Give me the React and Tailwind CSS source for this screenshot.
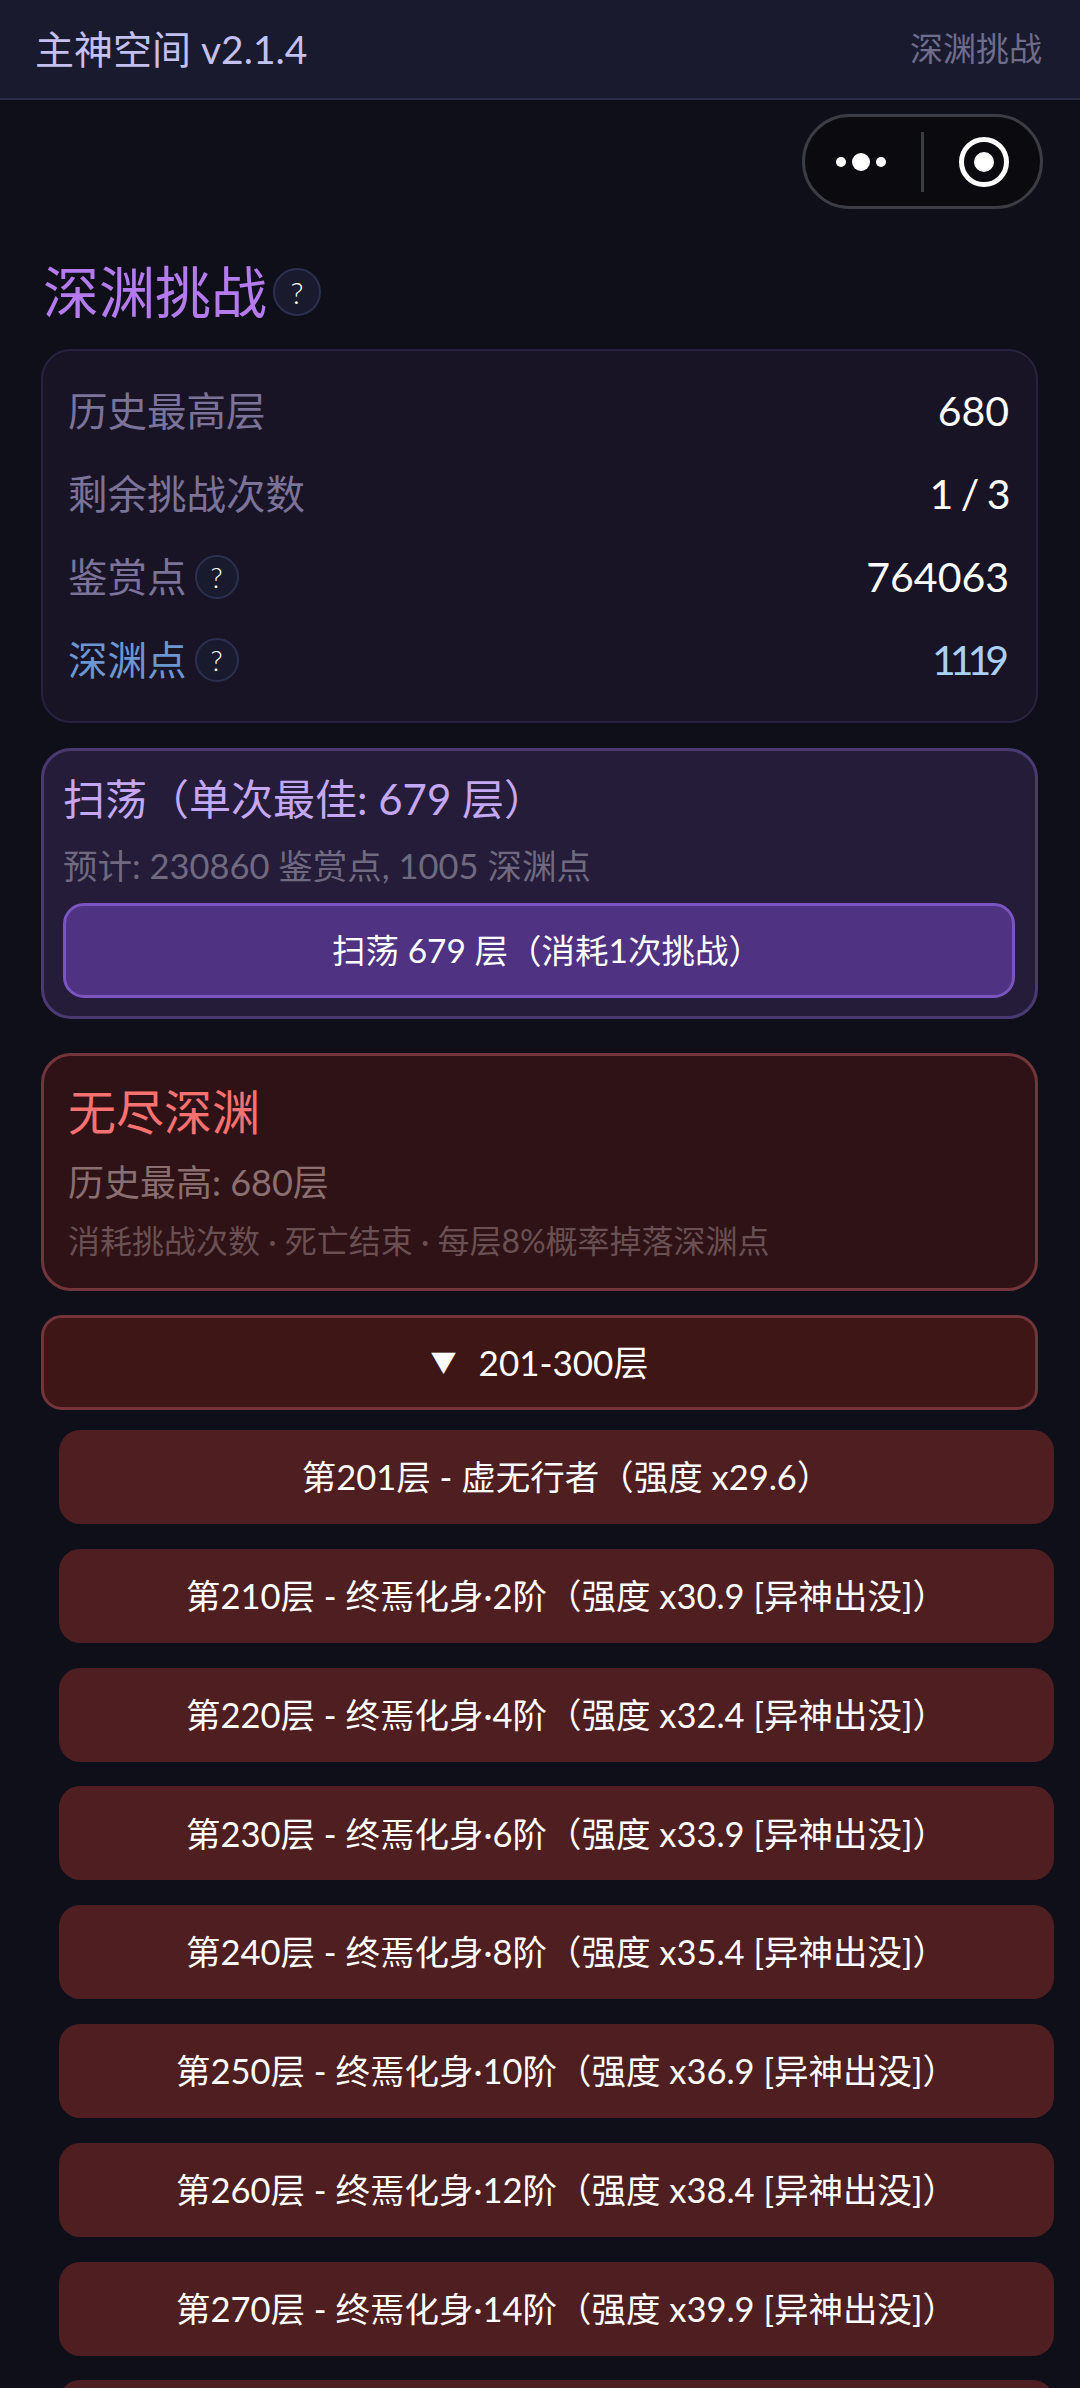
import React from 'react';

const FONT = 'font-["Lato","Noto_Sans_CJK_SC",sans-serif]';

const floors = [
  '第201层 - 虚无行者（强度 x29.6）',
  '第210层 - 终焉化身·2阶（强度 x30.9 [异神出没]）',
  '第220层 - 终焉化身·4阶（强度 x32.4 [异神出没]）',
  '第230层 - 终焉化身·6阶（强度 x33.9 [异神出没]）',
  '第240层 - 终焉化身·8阶（强度 x35.4 [异神出没]）',
  '第250层 - 终焉化身·10阶（强度 x36.9 [异神出没]）',
  '第260层 - 终焉化身·12阶（强度 x38.4 [异神出没]）',
  '第270层 - 终焉化身·14阶（强度 x39.9 [异神出没]）',
  '第280层 - 终焉化身·16阶（强度 x41.4 [异神出没]）',
];

// little round "?" badge
const Help = ({ big }) => (
  <span
    className={`flex shrink-0 items-center justify-center rounded-full border-2 border-[#2c3050] bg-[#1a1a2e] font-light leading-none text-white ${
      big ? 'ml-[6px] h-[48px] w-[48px] text-[30px]' : 'ml-[8px] h-[44px] w-[44px] text-[28px]'
    }`}
  >
    ?
  </span>
);

const StatRow = ({ label, value, help, labelColor = 'text-[#7b7399]', valueClass = 'text-white' }) => (
  <div className="flex h-[83px] items-center justify-between">
    <div className={`flex items-center text-[39.5px] ${labelColor}`}>
      {label}
      {help && <Help />}
    </div>
    <div className={`text-[41px] ${valueClass}`}>{value}</div>
  </div>
);

const Capsule = () => (
  <div className="absolute right-[37px] top-[114px] flex h-[95px] w-[241px] items-center rounded-full border-[3px] border-[#3c3c44] bg-[#0a0a0f]">
    <svg width="241" height="95" viewBox="0 0 241 95" className="shrink-0" style={{ margin: '-3px' }}>
      <circle cx="39" cy="48" r="5" fill="#fff" />
      <circle cx="59" cy="48" r="9" fill="#fff" />
      <circle cx="79" cy="48" r="5" fill="#fff" />
      <rect x="119" y="18" width="3" height="60" fill="#3c3c44" />
      <circle cx="182" cy="48" r="22.5" fill="none" stroke="#fff" strokeWidth="5" />
      <circle cx="182" cy="48" r="10" fill="#fff" />
    </svg>
  </div>
);

export default function App() {
  return (
    <div className={`relative h-[2388px] w-[1080px] overflow-hidden bg-[#0f0f1a] ${FONT}`}>
      {/* Header */}
      <header className="flex h-[100px] items-center justify-between border-b-2 border-[#2a2a4a] bg-[#1a1a2e] pl-[35px] pr-[38px]">
        <span className="text-[39px] text-[#c4c0f0]">主神空间 v2.1.4</span>
        <span className="text-[33px] text-[#6f6c8c]">深渊挑战</span>
      </header>
      <Capsule />

      <main className="pl-[41px] pr-[42px] pt-[166px]">
        <div className="flex h-[52px] items-center pl-[2px]">
          <h1 className="text-[56px] font-normal leading-none text-[#b57bee]">深渊挑战</h1>
          <Help big />
        </div>

        {/* Stats */}
        <section className="mt-[31px] rounded-[30px] border-2 border-[#2a2140] bg-[#181426] pb-[20px] pl-[25px] pr-[27px] pt-[18px]">
          <StatRow label="历史最高层" value="680" />
          <StatRow label="剩余挑战次数" value="1 / 3" valueClass="text-white tracking-[-1.5px]" />
          <StatRow label="鉴赏点" value="764063" help />
          <StatRow label="深渊点" value="1119" help labelColor="text-[#6b96d2]" valueClass="text-[#a9d0f5] tracking-[-6px] pr-[6px]" />
        </section>

        {/* Sweep */}
        <section className="mt-[25px] rounded-[30px] border-[3px] border-[#4b3a72] bg-[#241c38] pl-[19px] pr-[20px] pt-[20px]">
          <div className="text-[42px] leading-[56px] text-[#c4a8f5]">扫荡（单次最佳: 679 层）</div>
          <div className="mt-[16px] text-[34.5px] leading-[46px] text-[#6f6a80]">预计: 230860 鉴赏点, 1005 深渊点</div>
          <button className="mb-[18px] mt-[14px] flex h-[95px] w-full items-center justify-center rounded-[21px] border-[3px] border-[#7a55c0] bg-[#4f3282] pl-[16px] text-[33.5px] text-white">
            扫荡 679 层（消耗1次挑战）
          </button>
        </section>

        {/* Endless */}
        <section className="mt-[34px] h-[238px] rounded-[30px] border-[3px] border-[#733539] bg-[#2e1215] pl-[24px] pt-[26px]">
          <div className="text-[48px] leading-[60px] text-[#f87171]">无尽深渊</div>
          <div className="mt-[16px] text-[36px] leading-[48px] text-[#8b6f70]">历史最高: 680层</div>
          <div className="mt-[13px] text-[32px] leading-[44px] text-[#6a5052]">消耗挑战次数 · 死亡结束 · 每层8%概率掉落深渊点</div>
        </section>

        {/* Floors */}
        <button className="mt-[24px] flex h-[95px] w-full items-center justify-center gap-[22px] rounded-[21px] border-[3px] border-[#733539] bg-[#3e1616] text-[35px] text-white">
          <span className="text-[26px]">▼</span>
          <span>201-300层</span>
        </button>
        <div className="ml-[18px] mt-[20px] flex w-[995px] flex-col gap-[24.8px]">
          {floors.map((floor) => (
            <button key={floor} className="flex h-[94px] shrink-0 items-center justify-center rounded-[21px] bg-[#4f1e20] pl-[20px] text-[34.5px] text-white">
              {floor}
            </button>
          ))}
        </div>
      </main>
    </div>
  );
}
